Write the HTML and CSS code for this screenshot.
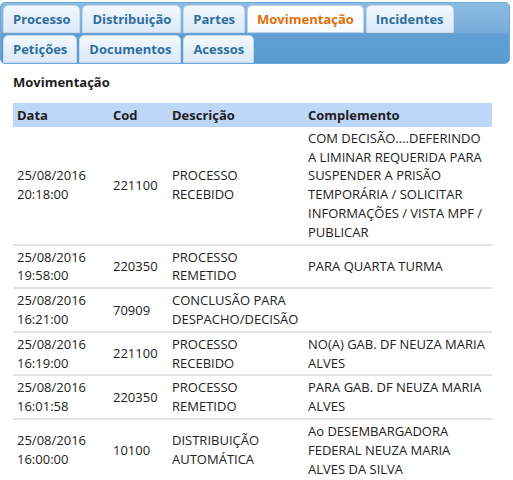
FILE: index.html
```html
<!DOCTYPE html>
<html lang="pt-BR">
<head>
<meta charset="utf-8">
<title>Movimentação</title>
<link rel="stylesheet" href="styles.css">
</head>
<body>
<div class="tabbar">
  <a class="tab">Processo</a>
  <a class="tab">Distribuição</a>
  <a class="tab">Partes</a>
  <a class="tab active">Movimentação</a>
  <a class="tab">Incidentes</a>
  <a class="tab">Petições</a>
  <a class="tab">Documentos</a>
  <a class="tab">Acessos</a>
</div>
<div class="panel">
  <h2 class="title">Movimentação</h2>
  <table class="mov">
    <colgroup>
      <col class="c-data"><col class="c-cod"><col class="c-desc"><col class="c-comp">
    </colgroup>
    <thead>
      <tr><th>Data</th><th>Cod</th><th>Descrição</th><th>Complemento</th></tr>
    </thead>
    <tbody>
      <tr><td>25/08/2016 20:18:00</td><td>221100</td><td>PROCESSO RECEBIDO</td><td>COM DECISÃO....DEFERINDO A LIMINAR REQUERIDA PARA SUSPENDER A PRISÃO TEMPORÁRIA / SOLICITAR INFORMAÇÕES / VISTA MPF / PUBLICAR</td></tr>
      <tr><td>25/08/2016 19:58:00</td><td>220350</td><td>PROCESSO REMETIDO</td><td>PARA QUARTA TURMA</td></tr>
      <tr><td>25/08/2016 16:21:00</td><td>70909</td><td>CONCLUSÃO PARA DESPACHO/DECISÃO</td><td></td></tr>
      <tr><td>25/08/2016 16:19:00</td><td>221100</td><td>PROCESSO RECEBIDO</td><td>NO(A) GAB. DF NEUZA MARIA ALVES</td></tr>
      <tr><td>25/08/2016 16:01:58</td><td>220350</td><td>PROCESSO REMETIDO</td><td>PARA GAB. DF NEUZA MARIA ALVES</td></tr>
      <tr><td>25/08/2016 16:00:00</td><td>10100</td><td>DISTRIBUIÇÃO AUTOMÁTICA</td><td>Ao DESEMBARGADORA FEDERAL NEUZA MARIA ALVES DA SILVA</td></tr>
    </tbody>
  </table>
</div>
</body>
</html>
```
FILE: styles.css
```css
html, body {
  margin: 0;
  padding: 0;
  background: #ffffff;
}
body {
  font-family: "Open Sans", "DejaVu Sans", sans-serif;
  font-size: 13px;
  color: #222222;
}
.tabbar {
  margin: 2px 3px 0 0;
  padding: 2px 2px 0 2px;
  box-sizing: border-box;
  height: 62px;
  border: 1px solid #6ea7d9;
  border-radius: 5px;
  background: linear-gradient(#8bbbe3 0, #7badda 48%, #619fd3 52%, #5a99cf 100%);
  display: flex;
  flex-wrap: wrap;
  align-content: flex-start;
  column-gap: 2px;
  row-gap: 2px;
}
.tab {
  display: block;
  box-sizing: border-box;
  height: 28px;
  line-height: 26px;
  padding: 0 9px;
  border: 1px solid #c5dbec;
  border-radius: 5px 5px 0 0;
  background: linear-gradient(#f2f8fd, #dbe9f8);
  color: #2e6e9e;
  font-weight: bold;
  font-size: 13px;
  white-space: nowrap;
}
.tab.active {
  background: linear-gradient(#ffffff, #f8fbfd);
  border-color: #b8d6ef;
  color: #e17009;
}
.panel {
  padding: 9px 21px 0 13px;
}
.title {
  margin: 0 0 11px 0;
  font-size: 13px;
  line-height: 19px;
  font-weight: bold;
  color: #1e1e1e;
}
.mov {
  width: 479px;
  table-layout: fixed;
  border-collapse: collapse;
}
.c-data { width: 96px; }
.c-cod { width: 59px; }
.c-desc { width: 136px; }
.c-comp { width: 188px; }
.mov th {
  background: #bed6f8;
  text-align: left;
  font-weight: bold;
  line-height: 18.8px;
  padding: 3px 4px 2px 4px;
  color: #1e1e1e;
}
.mov td {
  line-height: 18.8px;
  padding: 2px 4px;
  vertical-align: middle;
  border-bottom: 2px solid #e2e2e2;
  color: #222222;
}
.mov td:last-child,
.mov th:last-child {
  padding-right: 5px;
}
```
